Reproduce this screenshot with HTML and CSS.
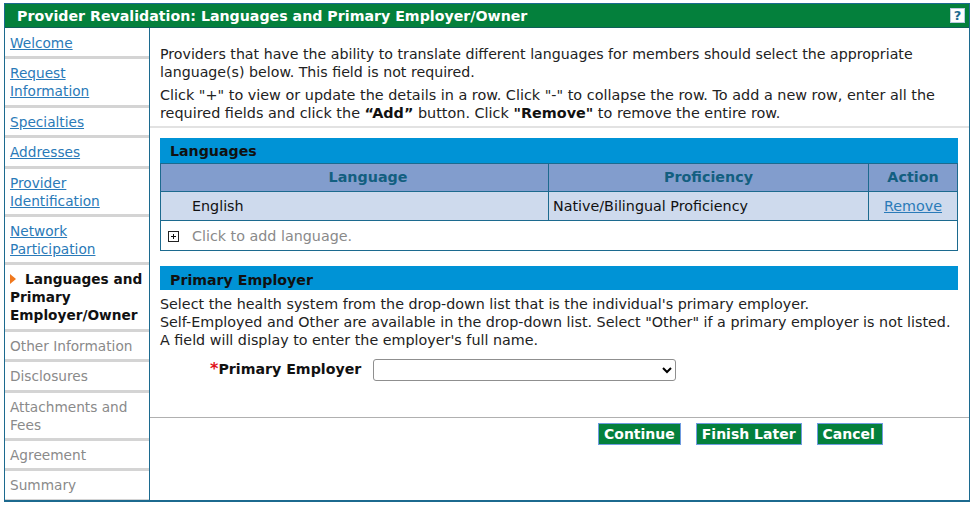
FILE: index.html
```html
<!DOCTYPE html>
<html lang="en">
<head>
<meta charset="utf-8">
<title>Provider Revalidation</title>
<link rel="stylesheet" href="styles.css">
</head>
<body>
<div class="frame">
  <header class="title">
    <h1>Provider Revalidation: Languages and Primary Employer/Owner</h1>
    <span class="help">?</span>
  </header>
  <div class="body">
    <nav class="nav">
      <div class="step"><a href="#">Welcome</a></div>
      <div class="step"><a href="#">Request Information</a></div>
      <div class="step"><a href="#">Specialties</a></div>
      <div class="step"><a href="#">Addresses</a></div>
      <div class="step"><a href="#">Provider Identification</a></div>
      <div class="step"><a href="#">Network Participation</a></div>
      <div class="step current"><span class="arrow"></span>Languages and Primary Employer/Owner</div>
      <div class="step off">Other Information</div>
      <div class="step off">Disclosures</div>
      <div class="step off">Attachments and Fees</div>
      <div class="step off">Agreement</div>
      <div class="step off">Summary</div>
    </nav>
    <main class="main">
      <section class="intro">
        <p class="p1">Providers that have the ability to translate different languages for members should select the appropriate language(s) below. This field is not required.</p>
        <p class="p2">Click "+" to view or update the details in a row. Click "-" to collapse the row. To add a new row, enter all the required fields and click the <b>“Add”</b> button. Click <b>"Remove"</b> to remove the entire row.</p>
      </section>
      <section class="panel">
        <h2 class="bar">Languages</h2>
        <div class="tbl">
          <div class="row head">
            <div class="c1">Language</div>
            <div class="c2">Proficiency</div>
            <div class="c3">Action</div>
          </div>
          <div class="row data">
            <div class="c1 lang">English</div>
            <div class="c2 prof">Native/Bilingual Proficiency</div>
            <div class="c3"><a href="#">Remove</a></div>
          </div>
          <div class="add">
            <svg class="plus" width="11" height="11" viewBox="0 0 11 11"><rect x="0.5" y="0.5" width="10" height="10" fill="#fff" stroke="#222"/><path d="M3 5.5h5M5.5 3v5" stroke="#111" fill="none"/></svg>
            <span>Click to add language.</span>
          </div>
        </div>
      </section>
      <section class="panel second">
        <h2 class="bar">Primary Employer</h2>
        <p class="desc">Select the health system from the drop-down list that is the individual's primary employer.<br>Self-Employed and Other are available in the drop-down list. Select "Other" if a primary employer is not listed.<br>A field will display to enter the employer's full name.</p>
        <div class="field">
          <label class="flabel"><span class="req">*</span>Primary Employer</label>
          <select class="sel"><option></option></select>
        </div>
      </section>
      <footer class="actions">
        <button class="btn">Continue</button>
        <button class="btn">Finish Later</button>
        <button class="btn">Cancel</button>
      </footer>
    </main>
  </div>
</div>
</body>
</html>
```
FILE: styles.css
```css
* { box-sizing: border-box; }
html, body { margin: 0; padding: 0; background: #fff; }
body {
  width: 975px; height: 506px; overflow: hidden;
  font-family: "DejaVu Sans", Verdana, sans-serif;
  font-size: 14px; line-height: 18px; color: #222;
  padding: 3px 5px 0 4px;
}
.frame { width: 966px; height: 499px; border: 1px solid #1c6a8f; border-width: 1px 1px 2px 1px; display: flex; flex-direction: column; }
.title { height: 24px; flex: none; background: #04803c; border-bottom: 1px solid #0f5f5a; display: flex; align-items: center; justify-content: space-between; padding: 0 4px 0 12px; }
.title h1 { margin: 0; font-size: 14.2px; font-weight: bold; color: #fff; }
.help { width: 15px; height: 15px; background: #fff; color: #1c6a8f; font-weight: bold; font-size: 13px; line-height: 14px; text-align: center; border: 1px solid #b9cbe0; }
.body { flex: 1; display: flex; min-height: 0; }
.nav { width: 145px; flex: none; border-right: 1px solid #1c6a8f; padding-top: 1px; overflow: hidden; }
.step { padding: 5px 0 4.4px 5px; border-bottom: 3px solid #d4d4d4; color: #8a8a8a; font-size: 13.7px; }
.step a { color: #2a7ab8; }
.step.current { color: #111; font-weight: bold; font-size: 13.7px; }
.step.off { font-weight: normal; }
.arrow { display: inline-block; width: 0; height: 0; border-left: 6px solid #f0781e; border-top: 5px solid transparent; border-bottom: 5px solid transparent; margin-right: 9px; }
.main { flex: 1; min-width: 0; position: relative; font-size: 14.3px; }
.intro { padding: 17px 10px 4px 10px; border-bottom: 2px solid #e2e2e2; }
.intro p { margin: 0 0 5px; }
.intro p:last-child { margin-bottom: 0; }
.intro .p1 { font-size: 14.2px; }
.intro .p2 { font-size: 14.4px; }
.intro b { color: #111; }
.panel { margin: 10px 11px 0 10px; }
.panel.second { margin-top: 15px; }
.bar { margin: 0; height: 25px; background: #0093d6; color: #111; font-size: 14.2px; font-weight: bold; line-height: 27px; padding-left: 10px; }
.second .bar { height: 24px; line-height: 28px; }
.tbl { border: 1px solid #1c6a8f; border-top: 0; }
.row { display: grid; grid-template-columns: 388px 320px 1fr; }
.row > div { border-right: 1px solid #1c6a8f; border-top: 1px solid #1c6a8f; }
.row > div:last-child { border-right: 0; }
.head > div { height: 28px; background: #829dcd; color: #135f80; font-weight: bold; text-align: center; line-height: 26px; }
.head .c1 { padding-left: 27px; }
.data > div { height: 29px; background: #cedaed; line-height: 28px; }
.data .c3 { text-align: center; }
.data a { color: #2a7ab8; }
.lang { padding-left: 31px; color: #111; }
.prof { padding-left: 4px; color: #111; }
.add { border-top: 1px solid #1c6a8f; height: 30px; display: flex; align-items: center; padding-left: 7px; color: #8a8a8a; }
.add span { margin-left: 13px; }
.plus { margin-top: 2px; }
.desc { margin: 0; padding-top: 5px; }
.field { display: flex; align-items: center; padding: 10px 0 0 50px; }
.flabel { font-weight: bold; color: #111; font-size: 14.2px; margin-bottom: 3px; }
.req { color: #e0101a; font-size: 16px; }
.sel { width: 303px; height: 22px; margin-left: 12px; background: #fff; border: 1px solid #8f8f8f; border-radius: 3px; }
.actions { position: absolute; left: 0; right: 0; top: 389px; border-top: 1px solid #b0b0b0; display: flex; padding: 5px 0 0 448px; gap: 15px; }
.btn { height: 22px; padding: 0 5px; background: #04803c; color: #fff; font-family: inherit; font-size: 14px; font-weight: bold; border: 1px solid #6f9be0; border-radius: 0; }
.btn:last-child { padding-right: 7px; }
```
